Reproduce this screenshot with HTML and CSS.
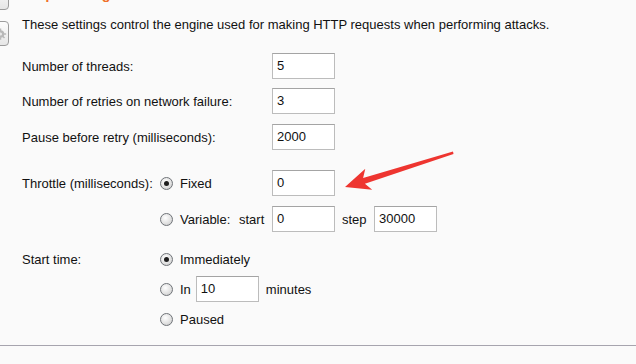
FILE: index.html
```html
<!DOCTYPE html>
<html lang="en">
<head>
    <meta charset="UTF-8">
    <title>Request Engine</title>
    <link rel="stylesheet" href="styles.css">
</head>
<body>
    <div class="panel">
        <div class="side">
            <div class="side-btn top-btn"></div>
            <div class="side-btn icon-btn">
                <svg width="24" height="24" viewBox="0 0 24 24">
                    <circle cx="12" cy="12" r="6" fill="#b8b8b8"/>
                    <circle cx="12" cy="12" r="2.5" fill="#e8e8e8"/>
                    <path d="M12 3v4M12 17v4M3 12h4M17 12h4M5.6 5.6l2.8 2.8M15.6 15.6l2.8 2.8M5.6 18.4l2.8-2.8" stroke="#b8b8b8" stroke-width="2.4"/>
                </svg>
            </div>
        </div>

        <div class="content">
            <h3 class="section-title">Request Engine</h3>
            <p class="desc">These settings control the engine used for making HTTP requests when performing attacks.</p>

            <div class="row wide">
                <span class="label">Number of threads:</span>
                <span class="field">5</span>
            </div>
            <div class="row wide gap-10">
                <span class="label">Number of retries on network failure:</span>
                <span class="field">3</span>
            </div>
            <div class="row wide gap-20">
                <span class="label">Pause before retry (milliseconds):</span>
                <span class="field">2000</span>
            </div>

            <div class="row gap-10">
                <span class="label">Throttle (milliseconds):</span>
                <span class="option fixed-opt"><i class="radio checked"></i>Fixed</span>
                <span class="field">0</span>
            </div>
            <div class="row gap-14">
                <span class="label"></span>
                <span class="option variable-opt"><i class="radio"></i>Variable:</span>
                <span class="small-label">start</span>
                <span class="field">0</span>
                <span class="step-label">step</span>
                <span class="field">30000</span>
            </div>

            <div class="row tight">
                <span class="label">Start time:</span>
                <span class="option"><i class="radio checked"></i>Immediately</span>
            </div>
            <div class="row tight">
                <span class="label"></span>
                <span class="option"><i class="radio"></i>In</span>
                <span class="field in-field">10</span>
                <span class="unit">minutes</span>
            </div>
            <div class="row tight">
                <span class="label"></span>
                <span class="option"><i class="radio"></i>Paused</span>
            </div>
        </div>
    </div>

    <hr class="divider">

    <svg class="arrow" width="636" height="364" viewBox="0 0 636 364">
        <polygon points="453,151.5 363.1,178 365.3,168.7 345,187 372.2,189.7 364.9,183.7 453.5,154" fill="#ee3530"/>
    </svg>
</body>
</html>
```

FILE: styles.css
```css
/* Page */
body {
    margin: 0;
    background: #fafafa;
    font-family: "Liberation Sans", Arial, sans-serif;
    font-size: 13px;
    color: #111;
    overflow: hidden;
    position: relative;
}

.panel {
    display: flex;
    gap: 13px;
    height: 345px;
}

/* Cropped side buttons */
.side {
    width: 9px;
    overflow: hidden;
    flex-shrink: 0;
}

.side-btn {
    width: 24px;
    margin-left: -15px;
    border: 1px solid #9c9c9c;
    border-radius: 4px;
    background: linear-gradient(#fdfdfd, #e6e6e6);
    box-sizing: border-box;
}

.top-btn {
    height: 24px;
    margin-top: -14px;
}

.icon-btn {
    height: 25px;
    margin-top: 11px;
    display: flex;
    align-items: center;
    justify-content: center;
}

.icon-btn svg {
    margin-left: 7px;
}

/* Content */
.content {
    flex: 1;
}

.section-title {
    margin: -13px 0 0;
    height: 15px;
    line-height: 15px;
    font-size: 14.5px;
    color: #f07028;
}

.desc {
    margin: 15px 0 20px;
    line-height: 16px;
}

.row {
    display: flex;
    align-items: center;
    height: 26px;
    margin-bottom: 9px;
}

.gap-10 {
    margin-bottom: 10px;
}

.gap-14 {
    margin-bottom: 14px;
}

.gap-20 {
    margin-bottom: 20px;
}

.tight {
    margin-bottom: 4px;
}

.label {
    width: 138px;
    flex-shrink: 0;
}

.wide .label {
    width: 250px;
}

.option {
    display: flex;
    align-items: center;
    gap: 7px;
}

.fixed-opt {
    width: 112px;
}

.variable-opt {
    width: 79px;
}

.radio {
    width: 13px;
    height: 13px;
    border: 1px solid #6f7378;
    border-radius: 50%;
    background: radial-gradient(circle at 40% 35%, #ffffff, #e2e2e2 55%, #c4c4c4);
    box-sizing: border-box;
    display: flex;
    align-items: center;
    justify-content: center;
}

.radio.checked::after {
    content: "";
    width: 5px;
    height: 5px;
    border-radius: 50%;
    background: #1e1e1e;
}

.field {
    width: 63px;
    height: 26px;
    box-sizing: border-box;
    border: 1px solid #bcbcbc;
    border-top-color: #a4a4a4;
    background: #fff;
    padding-left: 4px;
    line-height: 24px;
}

.small-label {
    width: 33px;
}

.step-label {
    margin-left: 7px;
    width: 32px;
}

.in-field {
    margin-left: 5px;
}

.unit {
    margin-left: 7px;
}

.divider {
    margin: 0;
    border: none;
    border-top: 1px solid #a6a4ae;
}

/* Annotation */
.arrow {
    position: absolute;
    left: 0;
    top: 0;
}
```
